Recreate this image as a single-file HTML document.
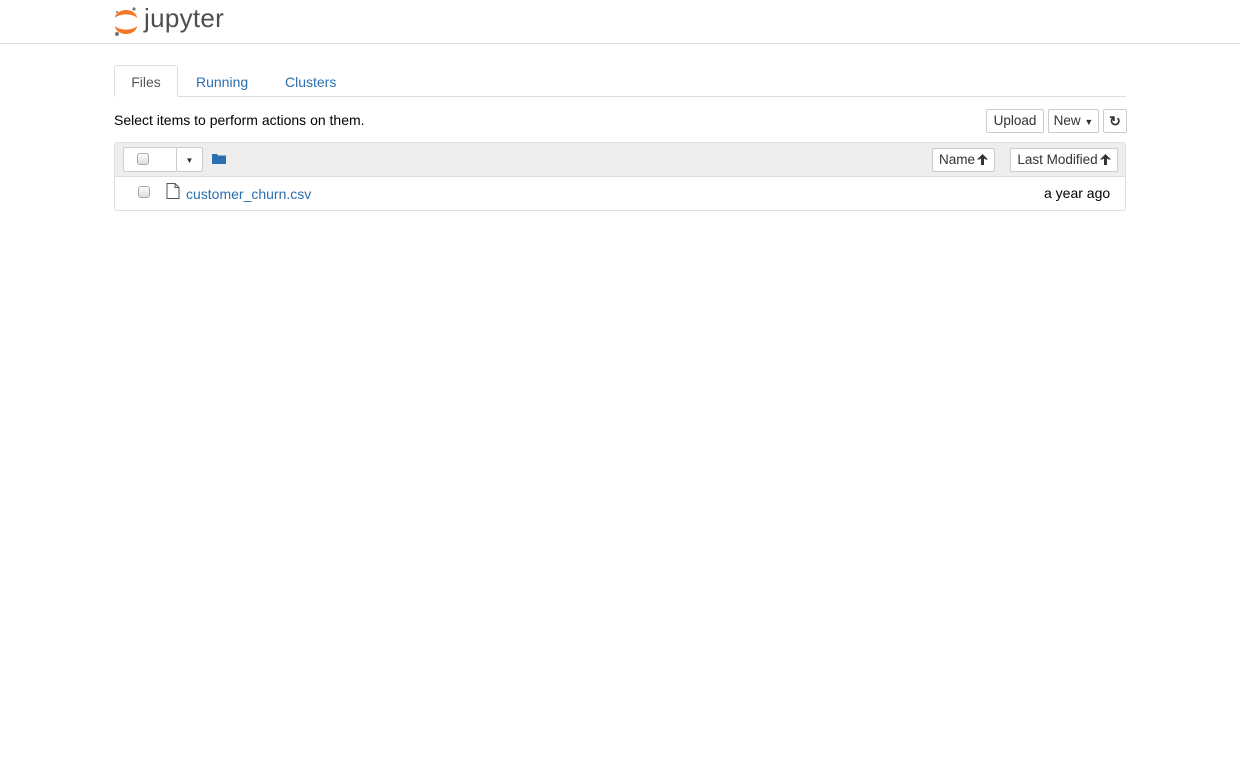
<!DOCTYPE html>
<html><head><style>
*{box-sizing:border-box}
body{margin:0;width:1240px;height:775px;background:#fff;font-family:"Liberation Sans",sans-serif;font-size:14px;color:#000;position:relative;overflow:hidden}
.abs{position:absolute}
.hdr{left:0;top:0;width:1240px;height:44px;border-bottom:1px solid #e0e0e0}
.btn{position:absolute;border:1px solid #ccc;border-radius:2px;background:#fff;font-size:13.5px;color:#333;text-align:center;line-height:22px}
a{color:#2a6fb0;text-decoration:none}
.cb{position:absolute;width:12px;height:12px;border:1px solid #aaa;border-radius:3px;background:linear-gradient(#fff,#ddd)}
.ar{display:inline-block;vertical-align:-1px;margin-left:2px}
</style></head><body>
<div class="abs hdr"></div>
<svg class="abs" style="left:113px;top:6px" width="26" height="32" viewBox="0 0 26 32">
<path d="M2 12 A11 8 0 0 1 24 12 A12 6 0 0 0 2 12Z" fill="#f37726"/>
<path d="M2 20 A11 8 0 0 0 24 20 A12 6 0 0 1 2 20Z" fill="#f37726"/>
<circle cx="21" cy="3" r="1.6" fill="#767677"/><circle cx="4" cy="28" r="2" fill="#767677"/><circle cx="4" cy="6" r="1" fill="#767677"/>
</svg>
<div class="abs" style="left:144px;top:3px;font-size:26px;color:#4e4e4e;letter-spacing:0.3px">jupyter</div>
<div class="abs" style="left:114px;top:96px;width:1012px;border-top:1px solid #ddd"></div>
<div class="abs" style="left:114px;top:65px;width:64px;height:32px;border:1px solid #ddd;border-bottom-color:#fff;border-radius:3px 3px 0 0;background:#fff;text-align:center;line-height:32px;color:#555">Files</div>
<div class="abs" style="left:196px;top:74px;color:#2a6fb0">Running</div>
<div class="abs" style="left:285px;top:74px;color:#2a6fb0">Clusters</div>
<div class="abs" style="left:114px;top:112px">Select items to perform actions on them.</div>
<div class="btn" style="left:986px;top:109px;width:58px;height:24px">Upload</div>
<div class="btn" style="left:1048px;top:109px;width:51px;height:24px">New <span style="font-size:9px">▼</span></div>
<div class="btn" style="left:1103px;top:109px;width:24px;height:24px;font-size:14px;font-weight:bold">↻</div>
<div class="abs" style="left:114px;top:142px;width:1012px;height:69px;border:1px solid #ddd;border-radius:3px"></div>
<div class="abs" style="left:115px;top:143px;width:1010px;height:34px;background:#eee;border-bottom:1px solid #ddd"></div>
<div class="btn" style="left:123px;top:147px;width:54px;height:25px"></div>
<div class="btn" style="left:176px;top:147px;width:27px;height:25px;font-size:8px;line-height:26px">▼</div>
<div class="cb" style="left:137px;top:153px"></div>
<svg class="abs" style="left:212px;top:152px" width="14" height="12"><path d="M0 2 h5 l1 1.5 h8 v8.5 h-14z" fill="#2a6fb0"/></svg>
<div class="btn" style="left:932px;top:148px;width:63px;height:24px">Name<svg class="ar" width="11" height="11" viewBox="0 0 11 11"><path d="M5.5 0 L11 5.5 L8.5 5.5 L7 4.5 V11 H4 V4.5 L2.5 5.5 L0 5.5Z" fill="#333"/></svg></div>
<div class="btn" style="left:1010px;top:148px;width:108px;height:24px">Last Modified<svg class="ar" width="11" height="11" viewBox="0 0 11 11"><path d="M5.5 0 L11 5.5 L8.5 5.5 L7 4.5 V11 H4 V4.5 L2.5 5.5 L0 5.5Z" fill="#333"/></svg></div>
<div class="cb" style="left:138px;top:186px"></div>
<svg class="abs" style="left:166px;top:183px" width="14" height="16"><path d="M1 .5 h8 l4 4 v11 h-12z M9 .5 v4 h4" fill="none" stroke="#555"/></svg>
<a class="abs" style="left:186px;top:186px">customer_churn.csv</a>
<div class="abs" style="left:1044px;top:185px">a year ago</div>
</body></html>
